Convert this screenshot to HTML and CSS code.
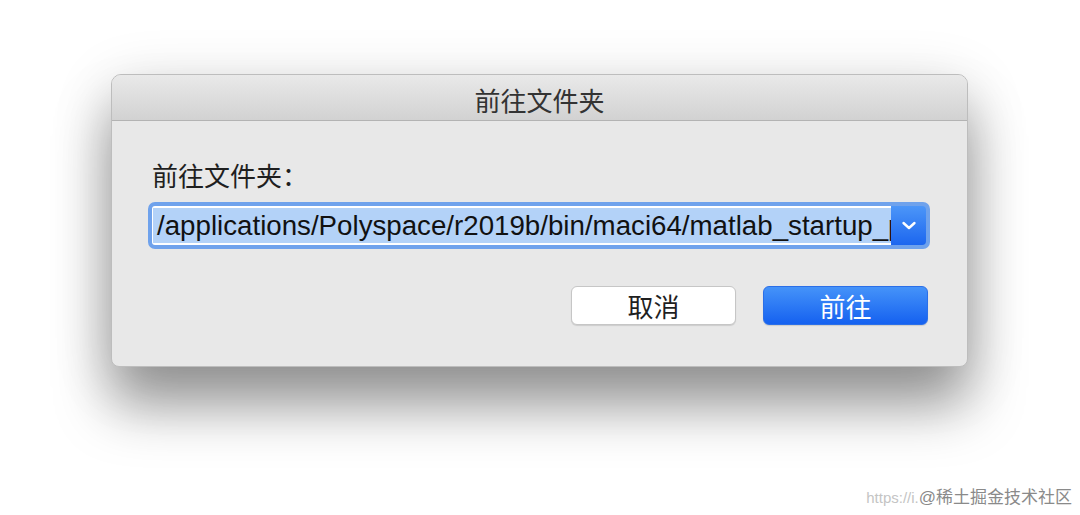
FILE: index.html
```html
<!DOCTYPE html>
<html lang="zh-CN">
<head>
<meta charset="utf-8">
<title>前往文件夹</title>
<link rel="stylesheet" href="styles.css">
</head>
<body>
<div class="stage">
  <div class="dialog">
    <div class="titlebar">前往文件夹</div>
    <div class="content">
      <div class="label">前往文件夹：</div>
      <div class="combo">
        <div class="field"><span class="sel">/applications/Polyspace/r2019b/bin/maci64/matlab_startup_p</span></div>
        <div class="dropbtn">
          <svg width="16" height="11" viewBox="0 0 16 11"><path d="M2.5 3 L8 8 L13.5 3" fill="none" stroke="#fff" stroke-width="2.4" stroke-linecap="round" stroke-linejoin="round"/></svg>
        </div>
      </div>
      <div class="actions">
        <button class="btn">取消</button>
        <button class="btn primary">前往</button>
      </div>
    </div>
  </div>
  <div class="wm-big">https://blog.csdn.net/TIOC</div>
  <div class="wm-small"><span class="wm-url">https://i.</span>@稀土掘金技术社区</div>
</div>
</body>
</html>
```

FILE: styles.css
```css
html, body {
  margin: 0;
  padding: 0;
  background: #ffffff;
}
body {
  width: 1080px;
  height: 515px;
  overflow: hidden;
  font-family: "Liberation Sans", "Noto Sans CJK SC", sans-serif;
}
.stage {
  position: relative;
  width: 1080px;
  height: 515px;
  padding: 74px 0 0 111px;
  box-sizing: border-box;
}
.dialog {
  width: 857px;
  height: 293px;
  box-sizing: border-box;
  background: #e8e8e8;
  border: 1px solid #bdbdbd;
  border-radius: 10px 10px 8px 8px;
  box-shadow: 0 40px 55px rgba(0,0,0,0.36), 0 12px 60px rgba(0,0,0,0.16);
  overflow: hidden;
  display: flex;
  flex-direction: column;
}
.titlebar {
  height: 45px;
  flex: none;
  background: linear-gradient(#e9e9e9, #d2d2d2);
  border-bottom: 1px solid #b3b3b3;
  text-align: center;
  font-family: "Noto Sans CJK SC", sans-serif;
  font-size: 26px;
  line-height: 50px;
  color: #333;
}
.content {
  flex: 1;
  padding: 37px 37px 0 36px;
  display: flex;
  flex-direction: column;
}
.label {
  font-family: "Noto Sans CJK SC", sans-serif;
  font-size: 26px;
  line-height: 33px;
  color: #1f1f1f;
  padding-left: 4px;
}
.combo {
  margin-top: 11px;
  height: 47px;
  box-sizing: border-box;
  border: 4px solid #6fa2ec;
  border-radius: 7px;
  background: #6fa2ec;
  display: flex;
}
.field {
  flex: 1;
  background: #fff;
  padding: 2px 2px 2px 1px;
  overflow: hidden;
  white-space: nowrap;
  border-radius: 3px 0 0 3px;
}
.sel {
  display: inline-block;
  background: #b3d2f8;
  font-size: 27.7px;
  line-height: 35px;
  color: #111;
  padding-left: 4px;
}
.dropbtn {
  width: 35px;
  flex: none;
  background: linear-gradient(#4c96f8, #1c66ef);
  border-radius: 0 4px 4px 0;
  display: flex;
  align-items: center;
  justify-content: center;
}
.actions {
  margin-top: 37px;
  display: flex;
  justify-content: flex-end;
  gap: 27px;
  padding-right: 2px;
}
.btn {
  width: 165px;
  height: 39px;
  box-sizing: border-box;
  border-radius: 6px;
  font-family: "Noto Sans CJK SC", sans-serif;
  font-size: 26px;
  line-height: 35px;
  padding: 0;
  border: 1px solid #c6c6c6;
  background: #ffffff;
  color: #1f1f1f;
  box-shadow: 0 1px 1px rgba(0,0,0,0.12);
}
.btn.primary {
  border: 1px solid #2b6fe8;
  background: linear-gradient(#4593f9, #1561f0);
  color: #fff;
}
.wm-big {
  position: absolute;
  left: 490px;
  top: 458px;
  font-size: 46px;
  line-height: 48px;
  color: rgba(255,255,255,0.6);
  white-space: nowrap;
  letter-spacing: -1px;
}
.wm-small {
  position: absolute;
  right: 8px;
  top: 486px;
  font-family: "Liberation Sans", "Noto Sans CJK SC", sans-serif;
  font-size: 17px;
  line-height: 24px;
  color: #8a8a8a;
  white-space: nowrap;
}
.wm-url {
  color: #c4c4c4;
  font-size: 15px;
}
```
